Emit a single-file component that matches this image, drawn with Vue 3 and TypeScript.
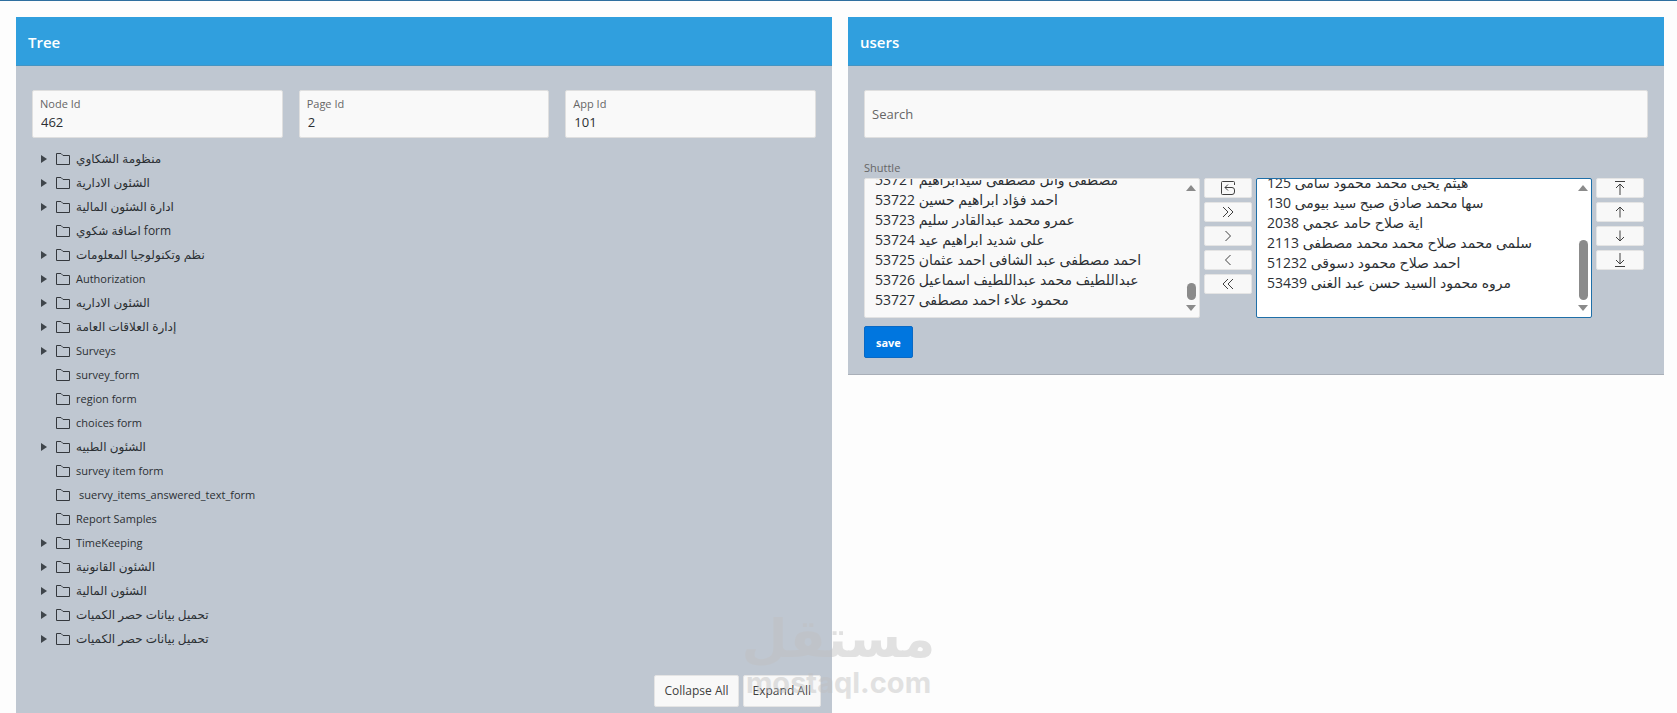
<script setup lang="ts">
import { ref } from 'vue'

interface TreeNode {
  label: string
  branch: boolean
  indent?: boolean
}

interface Field {
  id: string
  label: string
  value: string
}

interface IconButton {
  name: string
  path: string
}

const fields = ref<Field[]>([
  { id: 'node-id', label: 'Node Id', value: '462' },
  { id: 'page-id', label: 'Page Id', value: '2' },
  { id: 'app-id', label: 'App Id', value: '101' },
])

const nodes: TreeNode[] = [
  { label: 'منظومة الشكاوي', branch: true },
  { label: 'الشئون الادارية', branch: true },
  { label: 'ادارة الشئون المالية', branch: true },
  { label: 'اضافة شكوي form', branch: false },
  { label: 'نظم وتكنولوجيا المعلومات', branch: true },
  { label: 'Authorization', branch: true },
  { label: 'الشئون الاداريه', branch: true },
  { label: 'إدارة العلاقات العامة', branch: true },
  { label: 'Surveys', branch: true },
  { label: 'survey_form', branch: false },
  { label: 'region form', branch: false },
  { label: 'choices form', branch: false },
  { label: 'الشئون الطبيه', branch: true },
  { label: 'survey item form', branch: false },
  { label: 'suervy_items_answered_text_form', branch: false, indent: true },
  { label: 'Report Samples', branch: false },
  { label: 'TimeKeeping', branch: true },
  { label: 'الشئون القانونية', branch: true },
  { label: 'الشئون المالية', branch: true },
  { label: 'تحميل بيانات حصر الكميات', branch: true },
  { label: 'تحميل بيانات حصر الكميات', branch: true },
]

const isArabic = (text: string): boolean => /[\u0600-\u06ff]/.test(text)

const available: string[] = [
  '53721 مصطفى وائل مصطفى سيدابراهيم',
  '53722 احمد فؤاد ابراهيم حسين',
  '53723 عمرو محمد عبدالقادر سليم',
  '53724 على شديد ابراهيم عيد',
  '53725 احمد مصطفى عبد الشافى احمد عثمان',
  '53726 عبداللطيف محمد عبداللطيف اسماعيل',
  '53727 محمود علاء احمد مصطفى',
]

const selected: string[] = [
  '125 هيثم يحيى محمد محمود سامى',
  '130 سها محمد صادق صبح سيد بيومى',
  '2038 اية صلاح حامد عجمي',
  '2113 سلمى محمد صلاح محمد محمد مصطفى',
  '51232 احمد صلاح محمود دسوقى',
  '53439 مروه محمود السيد حسن عبد الغنى',
]

const moveButtons: IconButton[] = [
  { name: 'Reset', path: 'M14.5 5V2.5a1 1 0 0 0-1-1h-11a1 1 0 0 0-1 1v11a1 1 0 0 0 1 1H12a2.5 2.5 0 0 0 2.5-2.5v-2a2.5 2.5 0 0 0-2.5-2.5H5M8 4.5l-3 3 3 3' },
  { name: 'Move All', path: 'M3 3l5 5-5 5M8 3l5 5-5 5' },
  { name: 'Move', path: 'M5.5 3l5 5-5 5' },
  { name: 'Remove', path: 'M10.5 3l-5 5 5 5' },
  { name: 'Remove All', path: 'M8 3L3 8l5 5M13 3L8 8l5 5' },
]

const orderButtons: IconButton[] = [
  { name: 'Top', path: 'M3 1.5h10M8 15V4.5M4 8l4-4 4 4' },
  { name: 'Up', path: 'M8 13.5V3M4 7l4-4 4 4' },
  { name: 'Down', path: 'M8 2.5V13M4 9l4 4 4-4' },
  { name: 'Bottom', path: 'M3 14.5h10M8 1v10.5M4 8l4 4 4-4' },
]

const search = ref('')
</script>

<template>
  <main class="page">
    <section class="panel tree-panel">
      <h2 class="panel-title">Tree</h2>
      <div class="panel-body">
        <div class="fields">
          <div v-for="field in fields" :key="field.id" class="field">
            <label :for="field.id">{{ field.label }}</label>
            <input :id="field.id" v-model="field.value" type="text" />
          </div>
        </div>
        <ul class="tree">
          <li v-for="(node, i) in nodes" :key="i" class="node">
            <span class="toggle-slot">
              <button v-if="node.branch" type="button" class="toggle" :aria-label="`Expand ${node.label}`">
                <svg width="6" height="8" viewBox="0 0 6 8"><path d="M0 0l6 4-6 4z" fill="#3f454b" /></svg>
              </button>
            </span>
            <svg class="folder" width="16" height="16" viewBox="0 0 16 16">
              <path d="M1.5 13.5v-11h4.5l2 2h6.5v9z" fill="none" stroke="#34383d" />
            </svg>
            <span class="node-label" :class="{ indented: node.indent, arabic: isArabic(node.label) }">{{ node.label }}</span>
          </li>
        </ul>
        <div class="tree-actions">
          <button type="button" class="plain-button">Collapse All</button>
          <button type="button" class="plain-button">Expand All</button>
        </div>
      </div>
    </section>

    <section class="panel">
      <h2 class="panel-title">users</h2>
      <div class="panel-body users-body">
        <input v-model="search" type="text" class="search" placeholder="Search" aria-label="Search" />
        <label class="shuttle-label" for="available">Shuttle</label>
        <div class="shuttle">
          <div class="listbox">
            <select id="available" multiple :size="available.length">
              <option v-for="user in available" :key="user">{{ user }}</option>
            </select>
            <div class="scrollbar" aria-hidden="true">
              <svg width="10" height="6" viewBox="0 0 10 6"><path d="M0 6l5-6 5 6z" fill="#8b8b8b" /></svg>
              <span class="track"><span class="thumb short"></span></span>
              <svg width="10" height="6" viewBox="0 0 10 6"><path d="M0 0h10L5 6z" fill="#8b8b8b" /></svg>
            </div>
          </div>
          <div class="icon-column">
            <button v-for="b in moveButtons" :key="b.name" type="button" class="icon-button" :aria-label="b.name">
              <svg width="16" height="16" viewBox="0 0 16 16"><path :d="b.path" fill="none" stroke="#404040" /></svg>
            </button>
          </div>
          <div class="listbox focused">
            <select aria-label="Selected users" multiple :size="selected.length">
              <option v-for="user in selected" :key="user">{{ user }}</option>
            </select>
            <div class="scrollbar" aria-hidden="true">
              <svg width="10" height="6" viewBox="0 0 10 6"><path d="M0 6l5-6 5 6z" fill="#8b8b8b" /></svg>
              <span class="track"><span class="thumb tall"></span></span>
              <svg width="10" height="6" viewBox="0 0 10 6"><path d="M0 0h10L5 6z" fill="#8b8b8b" /></svg>
            </div>
          </div>
          <div class="icon-column">
            <button v-for="b in orderButtons" :key="b.name" type="button" class="icon-button" :aria-label="b.name">
              <svg width="16" height="16" viewBox="0 0 16 16"><path :d="b.path" fill="none" stroke="#404040" /></svg>
            </button>
          </div>
        </div>
        <button type="button" class="save">save</button>
      </div>
    </section>

    <div class="watermark">
      <span class="mark-arabic">مستقل</span>
      <span class="mark-latin">mostaql.com</span>
    </div>
  </main>
</template>

<style>
body {
  margin: 0;
  background: #fdfdfd;
}
</style>

<style scoped>
.page {
  position: relative;
  box-sizing: border-box;
  min-height: 100vh;
  display: grid;
  grid-template-columns: 1fr 1fr;
  gap: 16px;
  padding: 16px 13px 0 16px;
  border-top: 1px solid #2f6f9f;
  overflow: hidden;
  font-family: "Open Sans", "DejaVu Sans", sans-serif;
  font-size: 11px;
  line-height: 16px;
  color: #2b2f33;
}

button,
input,
select {
  font-family: inherit;
  color: inherit;
}

.panel {
  align-self: start;
  min-width: 0;
  box-sizing: border-box;
  background: #bfc7d1;
  border-bottom: 1px solid #a9afb8;
}

.tree-panel {
  align-self: stretch;
  border-bottom: 0;
}

.panel-title {
  margin: 0;
  padding: 13px 12px 11px;
  background: #309fde;
  border-bottom: 1px solid #4494c2;
  color: #fff;
  font-size: 15px;
  line-height: 24px;
  font-weight: 600;
}

.panel-body {
  padding: 24px 16px 6px;
}

.fields {
  display: grid;
  grid-template-columns: repeat(3, 1fr);
  gap: 16px;
}

.field {
  box-sizing: border-box;
  height: 48px;
  display: flex;
  flex-direction: column;
  padding: 5px 7px;
  background: #f9f9f9;
  border: 1px solid #dfdfdf;
  border-radius: 2px;
}

.field label {
  font-size: 11px;
  line-height: 16px;
  color: #666;
}

.field input {
  width: 100%;
  box-sizing: border-box;
  padding: 0 1px;
  border: 0;
  outline: 0;
  background: transparent;
  font-size: 13px;
  line-height: 20px;
}

.tree {
  list-style: none;
  margin: 9px 0 0;
  padding: 0 0 0 8px;
}

.node {
  height: 24px;
  display: flex;
  align-items: center;
}

.toggle-slot {
  width: 15px;
  display: flex;
}

.toggle {
  display: flex;
  padding: 0 1px;
  border: 0;
  background: none;
}

.folder {
  margin-right: 5px;
}

.node-label {
  white-space: nowrap;
}

.arabic {
  font-size: 12px;
}

.indented {
  padding-left: 3px;
}

.tree-actions {
  display: flex;
  justify-content: flex-end;
  gap: 4px;
  margin: 24px -5px 0 0;
}

.plain-button {
  height: 32px;
  padding: 0 9px;
  border: 1px solid #e4e4e4;
  border-radius: 2px;
  background: #f8f8f8;
  color: #404040;
  font-size: 12px;
  line-height: 16px;
}

.users-body {
  padding-bottom: 16px;
}

.search {
  display: block;
  width: 100%;
  height: 48px;
  box-sizing: border-box;
  padding: 0 7px;
  border: 1px solid #dfdfdf;
  border-radius: 2px;
  background: #f9f9f9;
  font-size: 13px;
}

.search::placeholder {
  color: #666;
  opacity: 1;
}

.shuttle-label {
  display: block;
  margin-top: 22px;
  padding-bottom: 2px;
  font-size: 11px;
  line-height: 16px;
  color: #666;
}

.shuttle {
  display: grid;
  grid-template-columns: 1fr 48px 1fr 48px;
  gap: 4px;
  padding-right: 4px;
}

.listbox {
  height: 140px;
  box-sizing: border-box;
  display: flex;
  align-items: flex-end;
  padding-bottom: 7px;
  border: 1px solid #e2e2e2;
  border-radius: 2px;
  background: #f9f9f9;
  overflow: hidden;
}

.listbox.focused {
  padding-bottom: 24px;
  border-color: #1f6fa8;
  background: #fff;
}

.listbox select {
  flex: 1;
  min-width: 0;
  height: auto;
  padding: 0 0 0 8px;
  border: 0;
  outline: 0;
  background: transparent;
  font-size: 14px;
  overflow: hidden;
}

.listbox option {
  box-sizing: border-box;
  height: 20px;
  min-height: 20px;
  padding: 0 2px;
  line-height: 20px;
}

.scrollbar {
  align-self: flex-start;
  flex: none;
  box-sizing: border-box;
  height: 138px;
  width: 16px;
  display: flex;
  flex-direction: column;
  align-items: center;
  gap: 5px;
  padding: 6px 0;
}

.track {
  flex: 1;
  display: flex;
  align-items: flex-end;
}

.thumb {
  width: 9px;
  border-radius: 5px;
  background: #8b8b8b;
}

.short {
  height: 17px;
}

.tall {
  height: 60px;
}

.icon-column {
  display: flex;
  flex-direction: column;
  gap: 4px;
}

.icon-button {
  height: 20px;
  display: flex;
  align-items: center;
  justify-content: center;
  padding: 0;
  border: 1px solid #e4e4e4;
  border-radius: 2px;
  background: #f8f8f8;
}

.save {
  display: block;
  margin-top: 8px;
  height: 32px;
  padding: 0 11px;
  border: 1px solid #0a69c4;
  border-radius: 2px;
  background: #0076df;
  color: #fff;
  font-size: 11px;
  font-weight: 700;
}

.watermark {
  position: absolute;
  left: 50%;
  bottom: 14px;
  width: 188px;
  margin-left: -94px;
  display: flex;
  flex-direction: column;
  align-items: center;
  color: #c0c0c0;
  opacity: 0.45;
  pointer-events: none;
  white-space: nowrap;
  font-weight: 700;
}

.mark-arabic {
  font-family: "DejaVu Sans", sans-serif;
  font-size: 53px;
  line-height: 56px;
}

.mark-latin {
  font-family: Inter, "Liberation Sans", sans-serif;
  font-size: 29px;
  line-height: 32px;
}
</style>
